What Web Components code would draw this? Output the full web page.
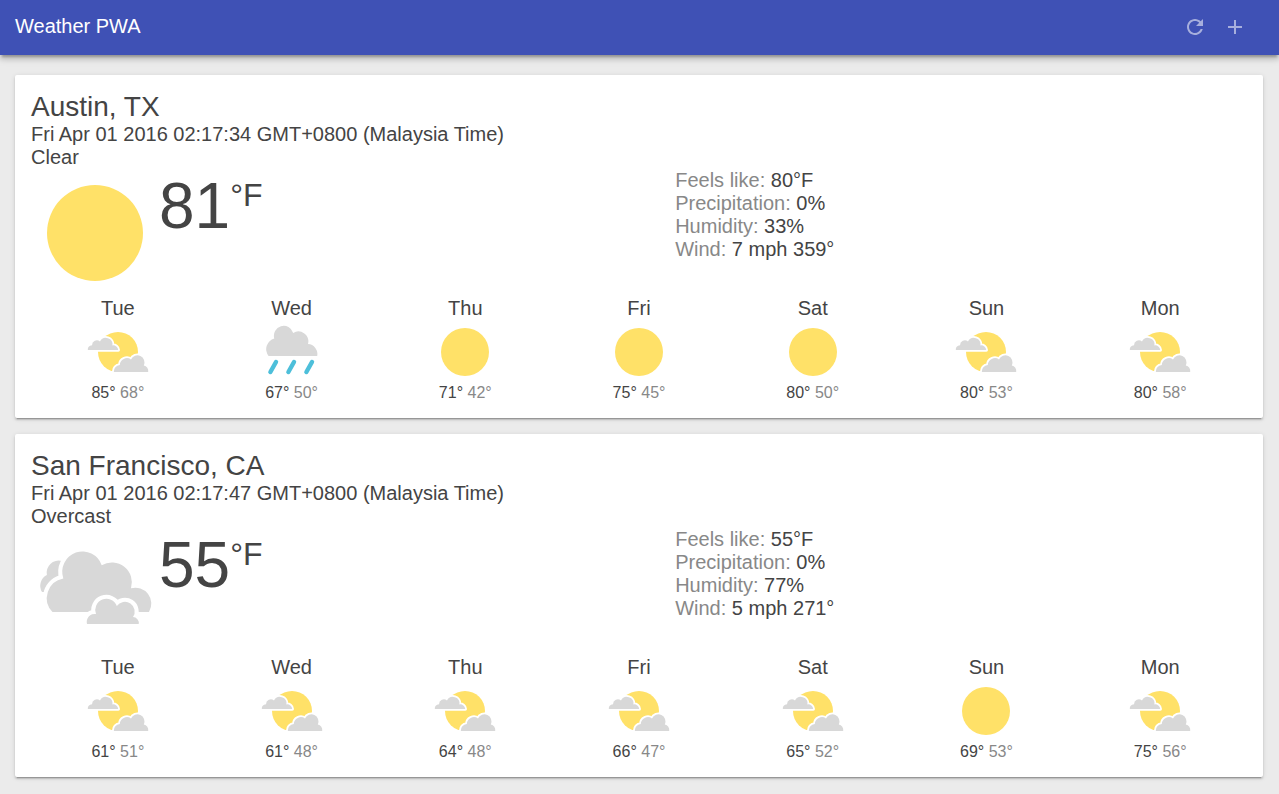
<!DOCTYPE html>
<html lang="en">
<head>
<meta charset="utf-8">
<meta name="viewport" content="width=device-width, initial-scale=1">
<title>Weather PWA</title>
<style>
  body { margin: 0; background: #ebebeb; color: #444; font: 20px/23px "Liberation Sans", Arial, sans-serif; }
</style>
</head>
<body>
<weather-app></weather-app>
<script>
const SHAPES = {
  clear: '<circle cx="32" cy="32" r="24" fill="#ffe168"/>',
  partly: `<circle cx="32" cy="32" r="20" fill="#ffe168"/>
    <g fill="#d8d8d8" stroke="#fff" stroke-width="3.6" stroke-linejoin="round" paint-order="stroke">
      <path d="M1.8 30A4.6 4.6 0 0 1 6 25.2A4.9 4.9 0 0 1 14 21.4A6.6 6.6 0 0 1 26.4 25.4A5 5 0 0 1 32.2 30Z"/>
      <path d="M27.8 52A6.5 6.5 0 0 1 33.8 45A7.2 7.2 0 0 1 45 39.4A7 7 0 0 1 57.8 45.4A5.8 5.8 0 0 1 62.2 52Z"/>
    </g>`,
  rain: `<path fill="#d8d8d8" d="M8.6 36A11 11 0 0 1 14.3 18.5A9.8 9.8 0 0 1 33.2 12.9A10 10 0 0 1 48 24A10 10 0 0 1 57.2 36Z"/>
    <path fill="none" stroke="#4dbfda" stroke-width="4.4" stroke-linecap="round" d="M16 42l-5.6 10M34 42l-5.6 10M52 42l-5.6 10"/>`,
  cloudy: `<g transform="scale(.5)" fill="#d8d8d8" stroke="#fff" stroke-width="8" stroke-linejoin="round" paint-order="stroke">
      <path stroke="none" d="M11 64A12 12 0 0 1 15.9 47A12 12 0 0 1 30.7 33L40 50L20 64Z"/>
      <path d="M21.5 84A20 20 0 0 1 32.3 50.4A20 20 0 0 1 70.7 37.2A20 20 0 0 1 100 60.3A16 16 0 0 1 118 84Z"/>
      <path d="M56 96A8 8 0 0 1 65 86A11 11 0 0 1 85.8 78A9.5 9.5 0 0 1 102 89A6 6 0 0 1 107.7 96Z"/>
    </g>`
};

customElements.define('weather-icon', class extends HTMLElement {
  connectedCallback() {
    this.attachShadow({ mode: 'open' }).innerHTML = `
      <style>
        :host { display: block; width: 64px; height: 64px; }
        svg { display: block; width: 100%; height: 100%; }
      </style>
      <svg viewBox="0 0 64 64" aria-hidden="true">${SHAPES[this.getAttribute('type')]}</svg>`;
  }
});

customElements.define('app-header', class extends HTMLElement {
  connectedCallback() {
    this.attachShadow({ mode: 'open' }).innerHTML = `
      <style>
        :host { display: block; position: relative; background: #3f51b5; color: #fff;
          box-shadow: 0 4px 5px 0 rgba(0,0,0,.14), 0 2px 9px 1px rgba(0,0,0,.12), 0 4px 2px -2px rgba(0,0,0,.2); }
        header { display: flex; align-items: flex-start; gap: 16px; padding: 15px 32px 16px 15px; }
        h1 { flex: 1; margin: 0; font-size: 20px; line-height: 23px; font-weight: 400; }
      </style>
      <header><h1><slot></slot></h1><slot name="actions"></slot></header>`;
  }
});

customElements.define('icon-button', class extends HTMLElement {
  connectedCallback() {
    this.attachShadow({ mode: 'open' }).innerHTML = `
      <style>
        :host { display: block; }
        button { display: block; width: 24px; height: 24px; padding: 0; border: 0; background: none; color: inherit; opacity: .54; cursor: pointer; }
        button:hover { opacity: 1; }
        svg { display: block; }
      </style>
      <button type="button" aria-label="${this.getAttribute('label')}">
        <svg width="24" height="24" viewBox="0 0 24 24" fill="currentColor"><path d="${this.getAttribute('path')}"/></svg>
      </button>`;
  }
});

customElements.define('forecast-day', class extends HTMLElement {
  connectedCallback() {
    const a = n => this.getAttribute(n);
    this.attachShadow({ mode: 'open' }).innerHTML = `
      <style>
        :host { display: flex; flex: 1; flex-direction: column; align-items: center; }
        .temps { font-size: 16px; line-height: 18px; }
        .low { color: #888; }
      </style>
      <div>${a('day')}</div>
      <weather-icon type="${a('type')}"></weather-icon>
      <div class="temps"><span>${a('high')}°</span> <span class="low">${a('low')}°</span></div>`;
  }
});

customElements.define('weather-card', class extends HTMLElement {
  set data(d) {
    this.attachShadow({ mode: 'open' }).innerHTML = `
      <style>
        :host { display: block; padding: 16px; background: #fff; border-radius: 2px;
          box-shadow: 0 2px 2px 0 rgba(0,0,0,.14), 0 3px 1px -2px rgba(0,0,0,.2), 0 1px 5px 0 rgba(0,0,0,.12); }
        h2 { margin: 0; font-size: 28px; line-height: 32px; font-weight: 400; }
        .current, .visual, .week { display: flex; }
        .visual, .details { flex-grow: 1; }
        .visual weather-icon { width: 128px; height: 128px; }
        .value { font-size: 64px; line-height: 75px; }
        .scale { font-size: 32px; line-height: 36px; vertical-align: super; }
        .label { color: #888; }
      </style>
      <h2>${d.city}</h2>
      <div>${d.date}</div>
      <div>${d.summary}</div>
      <div class="current">
        <div class="visual">
          <weather-icon type="${d.type}"></weather-icon>
          <div class="value">${d.temp}<span class="scale">°F</span></div>
        </div>
        <div class="details">
          ${d.details.map(([k, v]) => `<div><span class="label">${k}:</span> <span>${v}</span></div>`).join('')}
        </div>
      </div>
      <div class="week">
        ${d.week.map(([day, type, high, low]) => `<forecast-day day="${day}" type="${type}" high="${high}" low="${low}"></forecast-day>`).join('')}
      </div>`;
  }
});

const CITIES = [
  { city: 'Austin, TX', date: 'Fri Apr 01 2016 02:17:34 GMT+0800 (Malaysia Time)', summary: 'Clear', type: 'clear', temp: 81,
    details: [['Feels like', '80°F'], ['Precipitation', '0%'], ['Humidity', '33%'], ['Wind', '7 mph 359°']],
    week: [['Tue', 'partly', 85, 68], ['Wed', 'rain', 67, 50], ['Thu', 'clear', 71, 42], ['Fri', 'clear', 75, 45],
      ['Sat', 'clear', 80, 50], ['Sun', 'partly', 80, 53], ['Mon', 'partly', 80, 58]] },
  { city: 'San Francisco, CA', date: 'Fri Apr 01 2016 02:17:47 GMT+0800 (Malaysia Time)', summary: 'Overcast', type: 'cloudy', temp: 55,
    details: [['Feels like', '55°F'], ['Precipitation', '0%'], ['Humidity', '77%'], ['Wind', '5 mph 271°']],
    week: [['Tue', 'partly', 61, 51], ['Wed', 'partly', 61, 48], ['Thu', 'partly', 64, 48], ['Fri', 'partly', 66, 47],
      ['Sat', 'partly', 65, 52], ['Sun', 'clear', 69, 53], ['Mon', 'partly', 75, 56]] }
];

customElements.define('weather-app', class extends HTMLElement {
  connectedCallback() {
    const root = this.attachShadow({ mode: 'open' });
    root.innerHTML = `
      <style>
        :host { display: block; }
        main { display: flex; flex-direction: column; gap: 16px; padding: 20px 16px 16px 15px; }
      </style>
      <app-header>Weather PWA
        <icon-button slot="actions" label="Refresh" path="M17.65 6.35C16.2 4.9 14.21 4 12 4c-4.42 0-7.99 3.58-7.99 8s3.57 8 7.99 8c3.73 0 6.84-2.55 7.73-6h-2.08c-.82 2.33-3.04 4-5.65 4-3.31 0-6-2.69-6-6s2.69-6 6-6c1.66 0 3.14.69 4.22 1.78L13 11h7V4l-2.35 2.35z"></icon-button>
        <icon-button slot="actions" label="Add city" path="M19 13h-6v6h-2v-6H5v-2h6V5h2v6h6v2z"></icon-button>
      </app-header>
      <main></main>`;
    for (const city of CITIES) {
      const card = document.createElement('weather-card');
      card.data = city;
      root.querySelector('main').append(card);
    }
  }
});
</script>
</body>
</html>
